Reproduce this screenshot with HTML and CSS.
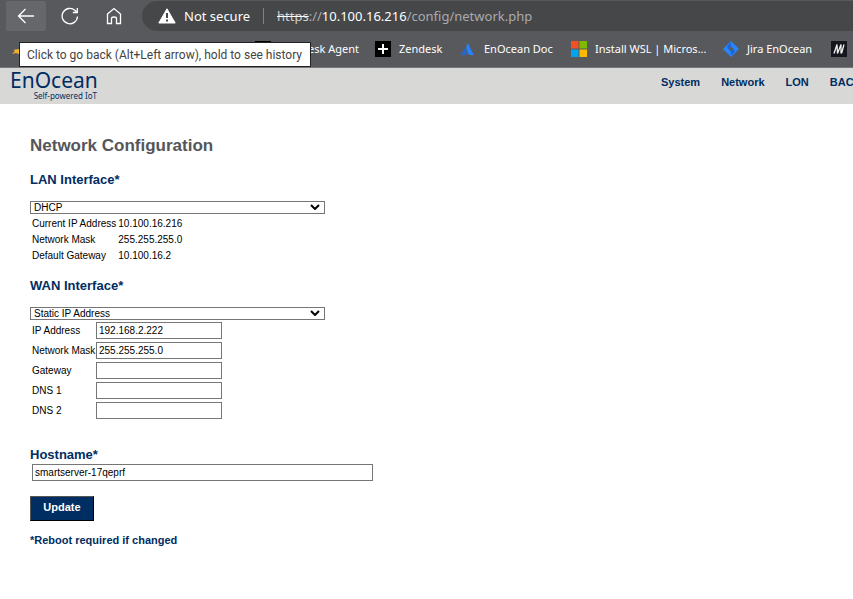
FILE: index.html
```html
<!DOCTYPE html>
<html lang="en">
<head>
<meta charset="utf-8">
<title>Network Configuration</title>
<link rel="stylesheet" href="styles.css">
</head>
<body>
<div class="browser">
  <div class="toolbar">
    <button class="tool tool-active" aria-label="Back"><svg width="18" height="18" viewBox="0 0 18 18"><path d="M17 9H1.500M8.500 2L1.500 9l7 7"/></svg></button>
    <button class="tool" aria-label="Refresh"><svg width="18" height="18" viewBox="0 0 18 18"><path d="M16.500 9.500a7.700 7.700 0 1 1-2.600-6.200L16 5.300M16.300 1v4.500h-4.500"/></svg></button>
    <button class="tool" aria-label="Home"><svg width="18" height="18" viewBox="0 0 18 18"><path d="M2.500 7L9 1.500 15.500 7v9.500h-4V11.500q0-1.500-2.500-1.500t-2.500 1.500v5h-4z"/></svg></button>
    <div class="address">
      <svg width="18" height="16" viewBox="0 0 18 16"><path d="M9 .8L17.200 15H.8z" fill="#fff" stroke="#fff" stroke-linejoin="round"/><path d="M9 5v5M9 11.500v2" stroke="#464749" stroke-width="2"/></svg>
      <span class="secure">Not secure</span>
      <span class="url"><s>https</s>://<b>10.100.16.216</b>/config/network.php</span>
    </div>
  </div>
  <nav class="bookmarks" aria-label="Bookmarks">
    <a href="#" aria-label="Favorite"><svg width="16" height="16" viewBox="0 0 16 16"><path d="M0 13l3-3-2-1 6-1v5l-3-1z" fill="#f0b428"/><path d="M6 3l4-2v4z" fill="#1593b8"/></svg></a>
    <a href="#"><svg width="16" height="16" viewBox="0 0 16 16"><path d="M0 0h16v16H0z"/></svg><span class="behind">Zendesk Agent</span></a>
    <a href="#"><svg width="16" height="16" viewBox="0 0 16 16"><path d="M0 0h16v16H0z"/><path d="M8 3v10M3 8h10" stroke="#fff" stroke-width="2"/></svg>Zendesk</a>
    <a href="#"><svg width="16" height="16" viewBox="0 0 16 16"><path d="M4.500 7.500q3 2.500 1.500 6.500H1z" fill="#1f69d8"/><path d="M7.800 2L13.800 14H9Q4.500 7 7.800 2z" fill="#2684ff"/></svg>EnOcean Doc</a>
    <a href="#"><svg width="16" height="16" viewBox="0 0 16 16"><path d="M0 0h7.500v7.500H0z" fill="#f25022"/><path d="M8.500 0H16v7.500H8.500z" fill="#7fba00"/><path d="M0 8.500h7.500V16H0z" fill="#00a4ef"/><path d="M8.500 8.500H16V16H8.500z" fill="#ffb900"/></svg>Install WSL | Micros...</a>
    <a href="#"><svg width="16" height="16" viewBox="0 0 16 16"><path d="M8 0l8 8-8 8-8-8z" fill="#2684ff"/><path d="M8 1.500v4L5.500 8 4 5.500zM8 14.500v-4L10.500 8l1.500 2.500z" fill="#1764dc"/><path d="M8 5.500L10.500 8 8 10.500 5.500 8z" fill="#58595d"/></svg>Jira EnOcean</a>
    <a href="#" aria-label="M"><svg width="16" height="16" viewBox="0 0 16 16"><path d="M0 0h16v16H0z" fill="#15151d"/><path d="M3 12.500L6 3.500l.5 9L10 3.500v9M10.500 12.500l2.500-9" fill="none" stroke="#eee" stroke-width="1.300"/></svg></a>
  </nav>
  <div class="tooltip" role="tooltip">Click to go back (Alt+Left arrow), hold to see history</div>
</div>
<header class="site">
  <a class="logo" href="#"><span class="brand">EnOcean</span><span class="tagline">Self-powered IoT</span></a>
  <nav class="menu" aria-label="Main"><a href="#">System</a><a href="#">Network</a><a href="#">LON</a><a href="#">BAC</a></nav>
</header>
<main>
  <h1>Network Configuration</h1>
  <form>
    <h2><label for="lan">LAN Interface*</label></h2>
    <div class="picker"><select id="lan"><option>DHCP</option></select><svg width="10" height="6" viewBox="0 0 10 6"><path d="M1 1l4 4 4-4"/></svg></div>
    <table class="facts">
      <tr><th scope="row">Current IP Address</th><td>10.100.16.216</td></tr>
      <tr><th scope="row">Network Mask</th><td>255.255.255.0</td></tr>
      <tr><th scope="row">Default Gateway</th><td>10.100.16.2</td></tr>
    </table>
    <h2><label for="wan">WAN Interface*</label></h2>
    <div class="picker"><select id="wan"><option>Static IP Address</option></select><svg width="10" height="6" viewBox="0 0 10 6"><path d="M1 1l4 4 4-4"/></svg></div>
    <div class="fields">
      <label for="ip">IP Address</label><input id="ip" type="text" value="192.168.2.222">
      <label for="mask">Network Mask</label><input id="mask" type="text" value="255.255.255.0">
      <label for="gw">Gateway</label><input id="gw" type="text">
      <label for="dns1">DNS 1</label><input id="dns1" type="text">
      <label for="dns2">DNS 2</label><input id="dns2" type="text">
    </div>
    <h2 class="host-title"><label for="host">Hostname*</label></h2>
    <input class="host" id="host" type="text" value="smartserver-17qeprf">
    <button class="update" type="button">Update</button>
    <p class="note">*Reboot required if changed</p>
  </form>
</main>
</body>
</html>
```
FILE: styles.css
```css
* { box-sizing: border-box; }
body {
  margin: 0;
  overflow: hidden;
  background: #fff;
  color: #000;
  font: 10px/16px "Liberation Sans", Arial, sans-serif;
}
a { color: inherit; text-decoration: none; }

.browser {
  position: relative;
  background: #58595d;
  border-bottom: 1px solid #77787b;
  color: #fff;
  font: 11px/16px "Noto Sans", "Open Sans", sans-serif;
}
.toolbar { display: flex; gap: 4px; padding: 1px 0 0 6px; }
.tool {
  display: flex;
  align-items: center;
  justify-content: center;
  width: 40px;
  height: 30px;
  padding: 0;
  border: 0;
  border-radius: 2px;
  background: none;
}
.tool-active { background: #66676b; }
.tool svg { fill: none; stroke: #fff; stroke-width: 1.3; }
.address {
  display: flex;
  flex: 1;
  align-items: center;
  gap: 8px;
  height: 30px;
  margin-left: 4px;
  padding-left: 16px;
  border-radius: 15px 0 0 15px;
  background: #464749;
  font-size: 13px;
  white-space: nowrap;
}
.secure { width: 80px; border-right: 1px solid #808184; }
.url { margin-left: 5px; color: #aaabad; }
.url s { color: #d0d0d2; text-decoration-color: #fff; }
.url b { color: #fff; font-weight: 400; }

.bookmarks {
  display: grid;
  grid-template-columns: 243px 120px 85px 111px 152px 108px 16px;
  align-items: center;
  height: 36px;
  padding-left: 12px;
  white-space: nowrap;
}
.bookmarks a { display: flex; align-items: center; gap: 8px; }
.bookmarks svg { flex: none; }
.behind { width: 80px; text-align: right; }
.tooltip {
  position: absolute;
  top: 42px;
  left: 19px;
  width: 292px;
  height: 25px;
  padding-left: 7px;
  border: 1px solid #222;
  background: #fff;
  color: #444;
  font: 12px/24px Roboto, sans-serif;
  white-space: nowrap;
}

.site {
  display: flex;
  justify-content: space-between;
  height: 36px;
  padding-left: 10px;
  background: #d8d8d7;
  color: #002d62;
}
.logo { display: flex; flex-direction: column; width: 87px; }
.brand { font: 21px/24px "Noto Sans", sans-serif; }
.tagline { font: 8px/8px "Noto Sans", sans-serif; text-align: right; }
.menu {
  display: flex;
  gap: 21px;
  width: 192px;
  padding-top: 6px;
  font-size: 11px;
  font-weight: 700;
}

main { padding: 32px 30px; }
h1 { margin: 0 0 15px; color: #55565a; font-size: 17px; line-height: 20px; }
h2 { margin: 0 0 12px; color: #002d62; font-size: 13px; line-height: 18px; }
.picker { position: relative; max-width: 295px; }
.picker svg {
  position: absolute;
  top: 3px;
  right: 5px;
  fill: none;
  stroke: #000;
  stroke-width: 2;
  pointer-events: none;
}
select, input {
  display: block;
  border: 1px solid #767676;
  border-radius: 0;
  background: #fff;
  color: #000;
  font: inherit;
}
select {
  width: 100%;
  height: 13px;
  padding: 0 3px;
  appearance: none;
  line-height: 11px;
}
input { width: 100%; height: 17px; padding: 0 2px; }
.facts { margin: 2px 0 13px; border-collapse: collapse; }
.facts th, .facts td { padding: 0 0 0 2px; font-weight: 400; text-align: left; }
.fields {
  display: grid;
  grid-template-columns: 64px 126px;
  row-gap: 3px;
  align-items: center;
  margin: 2px 0 27px;
  padding-left: 2px;
  white-space: nowrap;
}
.host-title { margin-bottom: 0; }
.host { max-width: 341px; margin-left: 2px; }
.update {
  display: block;
  width: 64px;
  height: 25px;
  margin: 15px 0 11px;
  padding: 0 0 3px;
  border: 1px solid #000;
  border-top-color: #555;
  border-left-color: #555;
  background: #002d62;
  color: #fff;
  font: 700 11px/16px "Liberation Sans", Arial, sans-serif;
}
.note { margin: 0; color: #002d62; font-size: 11px; font-weight: 700; }
```
